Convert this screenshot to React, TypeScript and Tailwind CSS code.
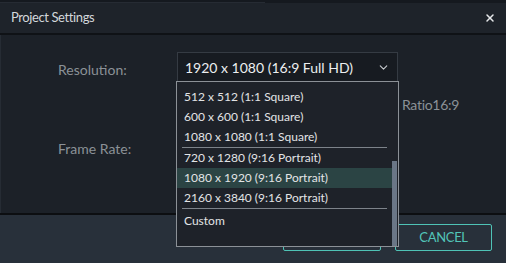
import { ChevronDown, X } from "lucide-react";

const groups = [
  ["512 x 512 (1:1 Square)", "600 x 600 (1:1 Square)", "1080 x 1080 (1:1 Square)"],
  ["720 x 1280 (9:16 Portrait)", "1080 x 1920 (9:16 Portrait)", "2160 x 3840 (9:16 Portrait)"]
];

export default function App() {
  return (
    <div className="h-[263px] w-[506px] overflow-hidden bg-[#15191f] font-['Lato','Open_Sans',sans-serif] flex flex-col">
      <div className="h-[3px] flex">
        <div className="w-[265px] border-b border-[#262b33]" />
      </div>

      <header className="h-[32px] bg-[#1e232a] flex items-center justify-between pl-[11px] pr-[10px] border-b-2 border-[#0f1216]">
        <span className="text-[13px] text-[#d3d7db] tracking-[-0.4px]">Project Settings</span>
        <X size={12} strokeWidth={3} className="text-[#e6e8ea]" />
      </header>

      <div className="relative flex-1 flex flex-col">
        <main className="h-[178px] bg-[#1c2128] border-l border-[#262c34] flex">
          <div className="w-[176px] pl-[57px] pt-[24px] flex flex-col gap-[58px] text-[14px] text-[#8b9197]">
            <span>Resolution:</span>
            <span>Frame Rate:</span>
          </div>
          <div className="pt-[17px] flex">
            <div className="w-[221px] h-[30px] bg-[#171b21] border border-[#353b43] flex items-center justify-between pl-[7px] pr-[7px]">
              <span className="text-[14px] text-[#eceef0]">1920 x 1080 (16:9 Full HD)</span>
              <ChevronDown size={13} strokeWidth={2} className="text-[#c8ccd0]" />
            </div>
            <span className="ml-[4px] mt-[42px] text-[14px] text-[#8b9197] tracking-[-0.3px]">Ratio16:9</span>
          </div>
        </main>

        <footer className="flex-1 bg-[#28303a] border-t-2 border-[#0c0e11] flex justify-end items-start pt-[9px] pr-[14px] gap-[14px]">
          <div className="w-[98px] h-[27px] border border-[#4fc3b6] rounded-[2px]" />
          <button className="w-[97px] h-[27px] pt-[1px] border border-[#4fc3b6] rounded-[2px] text-[13px] text-[#52c4b8] tracking-[-0.3px]">
            CANCEL
          </button>
        </footer>

        <div className="absolute left-[176px] top-[46px] w-[223px] h-[166px] bg-[#1e2229] border border-[#8c9197] pt-[5px] pr-[1px] flex">
          <div className="flex-1 flex flex-col text-[12px] text-[#e2e4e6]">
            {groups.map((g, gi) => (
              <div key={gi} className="flex flex-col">
                {g.map((item) => (
                  <div
                    key={item}
                    className={`h-[20px] pl-[7px] flex items-center ${item.startsWith("1080 x 1920") ? "bg-[#2b4444]" : ""}`}
                  >
                    {item}
                  </div>
                ))}
                <div className="mx-[5px] h-[1px] bg-[#7d838a]" />
              </div>
            ))}
            <div className="h-[24px] pl-[7px] flex items-center">Custom</div>
          </div>
          <div className="w-[5px] flex flex-col">
            <div className="h-[74px]" />
            <div className="flex-1 bg-[#6a7686]" />
          </div>
        </div>
      </div>
    </div>
  );
}
